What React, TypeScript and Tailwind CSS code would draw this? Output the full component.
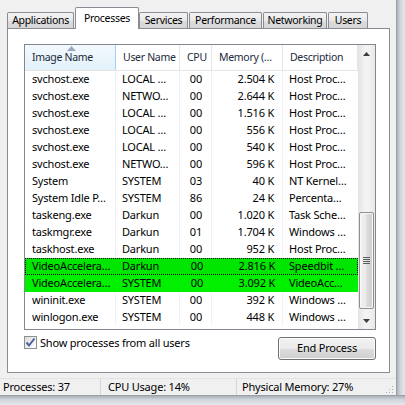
import React from "react";

type Row = { name: string; user: string; cpu: string; mem: string; desc: string; hl?: 0 | 1 | 2 };

const rows: Row[] = [
  { name: "svchost.exe", user: "LOCAL …", cpu: "00", mem: "2.504 K", desc: "Host Proc…" },
  { name: "svchost.exe", user: "NETWO…", cpu: "00", mem: "2.644 K", desc: "Host Proc…" },
  { name: "svchost.exe", user: "LOCAL …", cpu: "00", mem: "1.516 K", desc: "Host Proc…" },
  { name: "svchost.exe", user: "LOCAL …", cpu: "00", mem: "556 K", desc: "Host Proc…" },
  { name: "svchost.exe", user: "LOCAL …", cpu: "00", mem: "540 K", desc: "Host Proc…" },
  { name: "svchost.exe", user: "NETWO…", cpu: "00", mem: "596 K", desc: "Host Proc…" },
  { name: "System", user: "SYSTEM", cpu: "03", mem: "40 K", desc: "NT Kernel…" },
  { name: "System Idle P…", user: "SYSTEM", cpu: "86", mem: "24 K", desc: "Percenta…" },
  { name: "taskeng.exe", user: "Darkun", cpu: "00", mem: "1.020 K", desc: "Task Sche…" },
  { name: "taskmgr.exe", user: "Darkun", cpu: "01", mem: "1.704 K", desc: "Windows …" },
  { name: "taskhost.exe", user: "Darkun", cpu: "00", mem: "952 K", desc: "Host Proc…" },
  { name: "VideoAccelera…", user: "Darkun", cpu: "00", mem: "2.816 K", desc: "Speedbit …", hl: 1 },
  { name: "VideoAccelera…", user: "SYSTEM", cpu: "00", mem: "3.092 K", desc: "VideoAcc…", hl: 2 },
  { name: "wininit.exe", user: "SYSTEM", cpu: "00", mem: "392 K", desc: "Windows …" },
  { name: "winlogon.exe", user: "SYSTEM", cpu: "00", mem: "448 K", desc: "Windows …" },
];

function Tab({ label, selected, w, ml }: { label: string; selected?: boolean; w: string; ml: string }) {
  if (selected) {
    return (
      <div
        className={`${w} ${ml} relative z-10 h-[22px] -mb-px flex items-start justify-center pt-[3px] bg-white border border-b-0 border-[#898c95] rounded-t-[2px] text-[10.5px] tracking-[-0.3px] text-black leading-[14px]`}
      >
        {label}
      </div>
    );
  }
  return (
    <div
      className={`${w} ${ml} h-[16px] flex items-center justify-center bg-[linear-gradient(#f3f3f3,#e9e9e9_50%,#dcdcdc_51%,#d6d6d6)] border border-b-0 border-[#898c95] rounded-t-[2px] text-[10.5px] tracking-[-0.3px] text-black leading-none`}
    >
      {label}
    </div>
  );
}

function HeaderCell({ children, w, sorted }: { children: React.ReactNode; w: string; sorted?: boolean }) {
  return (
    <div
      className={`${w} relative h-full flex items-center pl-[7px] border-r text-[10.5px] tracking-[-0.3px] text-[#1b2a3a] ${
        sorted ? "bg-[linear-gradient(#f3f9fd,#e2f1fa)] border-[#9fd3f0]" : "bg-white border-[#e2e6ec]"
      } whitespace-nowrap overflow-hidden`}
    >
      {sorted && (
        <svg className="absolute left-[42px] top-[1px]" width="9" height="5" viewBox="0 0 9 5">
          <path d="M4.5 0 L9 5 L0 5 Z" fill="#98a9bd" />
        </svg>
      )}
      {children}
    </div>
  );
}

export default function App() {
  return (
    <div className="w-[405px] h-[405px] overflow-hidden flex flex-col bg-[#dfe3e8] font-['Noto_Sans',sans-serif] text-[11px] tracking-[-0.2px] text-black">
      <div className="flex h-[395px]">
        <div className="w-[396px] h-[395px] flex flex-col bg-[#f0f0f0] pt-[7px] pl-[7px]">
          <div className="flex items-end h-[21px]">
            <Tab label="Applications" w="w-[67px]" ml="ml-0" />
            <Tab label="Processes" w="w-[64px]" ml="ml-[1px]" selected />
            <Tab label="Services" w="w-[49px]" ml="ml-0" />
            <Tab label="Performance" w="w-[73px]" ml="ml-[1px]" />
            <Tab label="Networking" w="w-[64px]" ml="ml-[1px]" />
            <Tab label="Users" w="w-[40px]" ml="ml-[1px]" />
          </div>
          <div className="w-[383px] h-[345px] bg-white border border-[#898c95] pt-[15px] pl-[16px] flex flex-col">
            <div className="w-[352px] h-[286px] border border-[#828790] flex bg-white">
              <div className="w-[333px] flex flex-col">
                <div className="h-[26px] flex border-b border-[#e5e5e5]">
                  <HeaderCell w="w-[91px]" sorted>
                    Image Name
                  </HeaderCell>
                  <HeaderCell w="w-[64px]">User Name</HeaderCell>
                  <HeaderCell w="w-[32px]">CPU</HeaderCell>
                  <HeaderCell w="w-[71px]">Memory (…</HeaderCell>
                  <HeaderCell w="w-[75px]">Description</HeaderCell>
                </div>
                <div className="flex flex-col">
                  {rows.map((r, i) => (
                    <div
                      key={i}
                      className={`h-[17px] flex items-center whitespace-nowrap ${
                        r.hl === 1
                          ? "bg-[#00e600] outline-1 outline-dotted outline-black -outline-offset-1"
                          : r.hl === 2
                          ? "bg-[#00f000]"
                          : ""
                      }`}
                    >
                      <div className={`w-[91px] h-full flex items-center pl-[7px] ${r.hl ? "" : "border-r border-[#f0f2f5]"}`}>{r.name}</div>
                      <div className={`w-[64px] h-full flex items-center pl-[6px] ${r.hl ? "" : "border-r border-[#f0f2f5]"}`}>{r.user}</div>
                      <div className={`w-[32px] h-full flex items-center justify-end pr-[9px] ${r.hl ? "" : "border-r border-[#f0f2f5]"}`}>{r.cpu}</div>
                      <div className={`w-[71px] h-full flex items-center justify-end pr-[8px] ${r.hl ? "" : "border-r border-[#f0f2f5]"}`}>{r.mem}</div>
                      <div className="w-[75px] h-full flex items-center pl-[6px]">{r.desc}</div>
                    </div>
                  ))}
                </div>
              </div>
              <div className="w-[17px] flex flex-col bg-[linear-gradient(90deg,#e3e3e3,#f3f3f3_40%,#f3f3f3_60%,#e8e8e8)]">
                <div className="h-[17px] flex items-center justify-center">
                  <svg width="7" height="4" viewBox="0 0 7 4">
                    <path d="M3.5 0 L7 4 L0 4 Z" fill="#3c3c3c" />
                  </svg>
                </div>
                <div className="flex-1 flex flex-col items-center">
                  <div className="mt-[150px] w-[15px] h-[97px] rounded-[2px] border border-[#8e8f8f] bg-[linear-gradient(90deg,#f4f4f4,#e9e9e9_45%,#d9d9d9_55%,#d0d0d0)] shadow-[inset_0_0_0_1px_#f8f8f8] flex flex-col items-center justify-center gap-[1px]">
                    <div className="w-[7px] h-px bg-[#5d5d5d]" />
                    <div className="w-[7px] h-px bg-[#5d5d5d]" />
                    <div className="w-[7px] h-px bg-[#5d5d5d]" />
                    <div className="w-[7px] h-px bg-[#5d5d5d]" />
                  </div>
                </div>
                <div className="h-[17px] flex items-center justify-center">
                  <svg width="7" height="4" viewBox="0 0 7 4">
                    <path d="M0 0 L7 0 L3.5 4 Z" fill="#3c3c3c" />
                  </svg>
                </div>
              </div>
            </div>
            <div className="flex justify-between items-start mt-[7px] w-[352px]">
              <div className="flex items-center gap-[3px] mt-[-1px]">
                <div className="w-[13px] h-[13px] border border-[#8e8f8f] bg-[linear-gradient(135deg,#dcdcdc,#ffffff)] flex items-center justify-center">
                  <svg width="11" height="11" viewBox="0 0 11 11">
                    <path d="M1.5 5.5 L4 8.5 L9.5 1.5" fill="none" stroke="#4a62a0" strokeWidth="2" />
                  </svg>
                </div>
                <span className="leading-none">Show processes from all users</span>
              </div>
              <button className="w-[98px] h-[23px] rounded-[3px] border border-[#707070] bg-[linear-gradient(#f2f2f2_0%,#ebebeb_50%,#dddddd_51%,#cfcfcf_100%)] shadow-[inset_0_0_0_1px_#fcfcfc] text-[11px] tracking-[-0.2px] text-black font-['Noto_Sans',sans-serif]">
                End Process
              </button>
            </div>
          </div>
          <div className="mt-[5px] -ml-[7px] h-[17px] flex items-center border-t border-[#e3e3e3] bg-[#f0f0f0] relative">
            <div className="w-[100px] h-full flex items-center pl-[3px]">Processes: 37</div>
            <div className="w-[136px] h-full flex items-center pl-[7px] border-l border-[#d5d5d5]">CPU Usage: 14%</div>
            <div className="flex-1 h-full flex items-center pl-[5px] border-l border-[#d5d5d5]">Physical Memory: 27%</div>
            <svg className="absolute right-[2px] bottom-[1px]" width="10" height="10" viewBox="0 0 10 10">
              <rect x="8" y="2" width="1" height="1" fill="#b0b0b0" />
              <rect x="5" y="5" width="1" height="1" fill="#b0b0b0" />
              <rect x="8" y="5" width="1" height="1" fill="#b0b0b0" />
              <rect x="2" y="8" width="1" height="1" fill="#b0b0b0" />
              <rect x="5" y="8" width="1" height="1" fill="#b0b0b0" />
              <rect x="8" y="8" width="1" height="1" fill="#b0b0b0" />
            </svg>
          </div>
        </div>
        <div className="w-[9px] h-full bg-[linear-gradient(90deg,#a9b0b8,#cfd5db_40%,#e4e8ec)] border-l border-[#9aa0a6]" />
      </div>
      <div className="h-[10px] bg-[linear-gradient(#a9b0b8,#cfd5db_40%,#e4e8ec)] border-t border-[#9aa0a6]" />
    </div>
  );
}
